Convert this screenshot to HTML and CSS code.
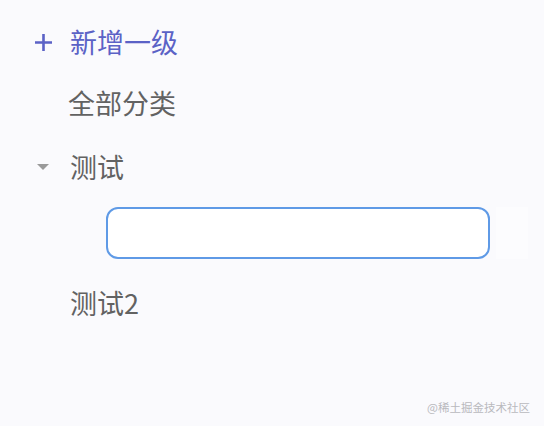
FILE: index.html
```html
<!DOCTYPE html>
<html lang="zh-CN">
<head>
<meta charset="utf-8">
<link rel="stylesheet" href="styles.css">
</head>
<body>
<div class="page">
  <div class="tree">
    <div class="row add">
      <span class="icon">
        <svg width="19" height="19" viewBox="0 0 19 19"><path d="M9.5 1v17M1 9.5h17" stroke="#5b62c6" stroke-width="2.6" fill="none"/></svg>
      </span>
      <span class="label">新增一级</span>
    </div>
    <div class="row">
      <span class="icon"></span>
      <span class="label all">全部分类</span>
    </div>
    <div class="row r3">
      <span class="icon"><span class="caret"></span></span>
      <span class="label">测试</span>
    </div>
    <div class="edit">
      <input class="input" type="text">
      <span class="ghost"></span>
    </div>
    <div class="row r4">
      <span class="icon"></span>
      <span class="label">测试2</span>
    </div>
  </div>
  <div class="mark">@稀土掘金技术社区</div>
</div>
</body>
</html>
```
FILE: styles.css
```css
html, body {
  margin: 0;
  padding: 0;
  background: #fafafd;
}
.page {
  position: relative;
  width: 544px;
  height: 426px;
  font-family: "Noto Sans CJK SC", "Noto Sans", sans-serif;
  overflow: hidden;
}
.tree {
  display: flex;
  flex-direction: column;
  gap: 21px;
  padding-top: 22px;
}
.row {
  display: flex;
  align-items: center;
  height: 40px;
  padding-left: 32px;
}
.icon {
  width: 22px;
  height: 22px;
  display: flex;
  align-items: center;
  justify-content: center;
  margin-right: 16px;
}
.label {
  font-size: 27px;
  font-weight: 400;
  line-height: 40px;
  color: #626262;
}
.label.all { margin-left: -2px; }
.add .label { color: #5b62c6; }
.caret {
  width: 0;
  height: 0;
  border-left: 6px solid transparent;
  border-right: 6px solid transparent;
  border-top: 6px solid #9a9a9a;
}
.r3 { margin-top: 3px; }
.edit {
  display: flex;
  align-items: center;
  height: 52px;
  margin-top: -1px;
  padding-left: 106px;
  gap: 6px;
}
.input {
  box-sizing: border-box;
  width: 384px;
  height: 52px;
  margin: 0;
  border: 2px solid #5f9ae6;
  border-radius: 12px;
  background: #fff;
  outline: none;
}
.ghost {
  width: 32px;
  height: 52px;
  background: #fcfcfe;
}
.r4 { margin-top: 3px; }
.mark {
  position: absolute;
  right: 14px;
  bottom: 11px;
  font-size: 11.5px;
  line-height: 16px;
  color: #b9b9be;
}
```
